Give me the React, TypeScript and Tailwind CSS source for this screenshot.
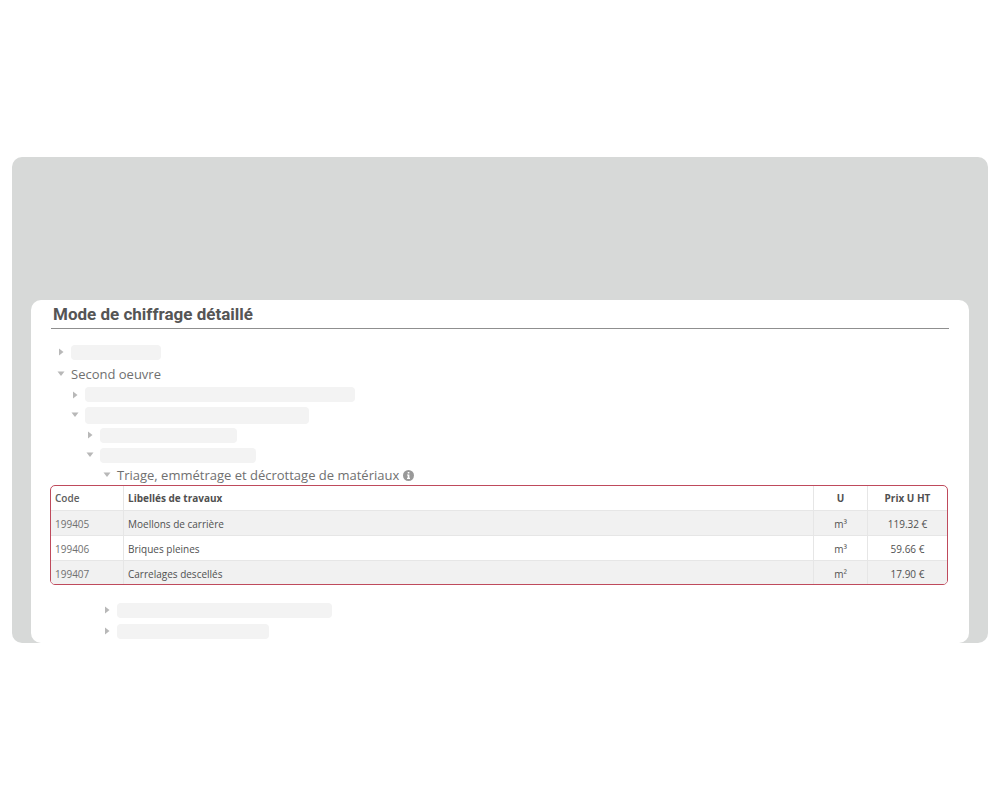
import React from 'react';

interface Work {
  code: string;
  label: string;
  unit: string;
  price: string;
}

const works: Work[] = [
  { code: '199405', label: 'Moellons de carrière', unit: 'm³', price: '119.32 €' },
  { code: '199406', label: 'Briques pleines', unit: 'm³', price: '59.66 €' },
  { code: '199407', label: 'Carrelages descellés', unit: 'm²', price: '17.90 €' },
];

interface TreeRowProps {
  open?: boolean;
  className: string;
  children: React.ReactNode;
}

const TreeRow: React.FC<TreeRowProps> = ({ open = false, className, children }) => (
  <li className={`flex items-center ${className}`}>
    <button
      type="button"
      aria-label={open ? 'Replier' : 'Déplier'}
      aria-expanded={open}
      className="flex w-5 h-4 shrink-0 items-center justify-center text-[#b8b8b8] cursor-pointer"
    >
      {open ? (
        <svg width="8" height="6" viewBox="0 0 8 6" fill="currentColor">
          <path d="M0.5 0.5h7L4 5z" />
        </svg>
      ) : (
        <svg width="6" height="8" viewBox="0 0 6 8" fill="currentColor">
          <path d="M1 0.5v7L5.5 4z" />
        </svg>
      )}
    </button>
    {children}
  </li>
);

// Grey bar standing in for a hidden label
const Placeholder: React.FC<{ className: string }> = ({ className }) => (
  <div className={`max-w-full rounded-sm bg-[#f3f3f3] ${className}`} />
);

const WorksTable: React.FC = () => (
  <div className="-ml-px mr-px overflow-hidden rounded-[5px] border border-[#bf4a5c]">
    <table className="w-full table-fixed border-separate border-spacing-0 text-[10px] leading-4 text-[#505050]">
      <colgroup>
        <col className="w-[73px]" />
        <col />
        <col className="w-[54px]" />
        <col className="w-[79px]" />
      </colgroup>
      <thead>
        <tr className="h-6">
          <th className="border-r border-[#e6e6e6] px-1 text-left font-semibold text-[#606060]">Code</th>
          <th className="border-r border-[#e6e6e6] px-1 text-left font-bold">Libellés de travaux</th>
          <th className="border-r border-[#e6e6e6] text-center font-bold">U</th>
          <th className="text-center font-bold">Prix U HT</th>
        </tr>
      </thead>
      <tbody>
        {works.map((work) => (
          <tr key={work.code} className="h-[25px] last:h-6 odd:bg-[#f1f1f1]">
            <td className="border-t border-r border-[#e6e6e6] px-1 pt-0.5 text-[#707070]">{work.code}</td>
            <td className="border-t border-r border-[#e6e6e6] px-1 pt-0.5">{work.label}</td>
            <td className="border-t border-r border-[#e6e6e6] pt-0.5 text-center">{work.unit}</td>
            <td className="border-t border-[#e6e6e6] pt-0.5 text-center">{work.price}</td>
          </tr>
        ))}
      </tbody>
    </table>
  </div>
);

const App: React.FC = () => {
  return (
    <div className="flex min-h-screen items-center bg-white px-3 font-['Open_Sans','Noto_Sans',sans-serif]">
      <main className="w-full rounded-[10px] bg-[#d7d9d8] px-[19px] pt-[143px]">
        <section className="rounded-[10px] bg-white px-5 pb-px">
          <h1 className="border-b border-[#8f8f8f] px-0.5 py-0.5 font-['Roboto',sans-serif] text-[17px] leading-6 font-bold text-[#555]">
            Mode de chiffrage détaillé
          </h1>

          <ul className="pt-3 text-[13px] leading-5 text-[#707070]">
            <TreeRow className="h-[22px]">
              <Placeholder className="h-[15px] w-[90px]" />
            </TreeRow>
            <TreeRow open className="h-[21px]">
              <span>Second oeuvre</span>
            </TreeRow>
            <TreeRow className="h-[21px] pl-3.5">
              <Placeholder className="h-[15px] w-[270px]" />
            </TreeRow>
            <TreeRow open className="h-5 pl-3.5">
              <Placeholder className="h-[17px] w-[224px]" />
            </TreeRow>
            <TreeRow className="h-5 pl-[29px]">
              <Placeholder className="h-[15px] w-[137px]" />
            </TreeRow>
            <TreeRow open className="h-5 pl-[29px]">
              <Placeholder className="h-[15px] w-[156px]" />
            </TreeRow>
            <TreeRow open className="h-5 pl-[46px]">
              <span>Triage, emmétrage et décrottage de matériaux</span>
              <svg className="ml-1" width="11" height="11" viewBox="0 0 11 11">
                <circle cx="5.5" cy="5.5" r="5.5" fill="#999" />
                <path d="M4.7 2h1.7v1.5H4.7zM4 4.5h2.4v3.2H7V9H4V7.7h.7V5.6H4z" fill="#fff" />
              </svg>
            </TreeRow>
          </ul>

          <WorksTable />

          <ul className="pt-[15px]">
            <TreeRow className="h-5 pl-[46px]">
              <Placeholder className="h-[15px] w-[215px]" />
            </TreeRow>
            <TreeRow className="h-[22px] pl-[46px]">
              <Placeholder className="h-[15px] w-[152px]" />
            </TreeRow>
          </ul>
        </section>
      </main>
    </div>
  );
};

export default App;
